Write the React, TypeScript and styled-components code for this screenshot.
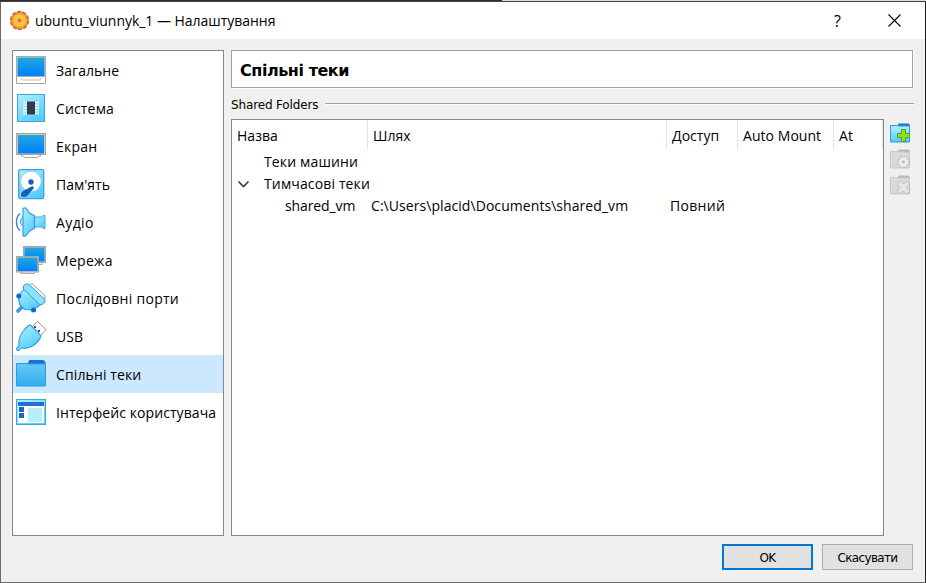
import React from "react";
import styled, { createGlobalStyle } from "styled-components";

const GlobalStyle = createGlobalStyle`
  * { box-sizing: border-box; }
  body { margin: 0; background: #fff; }
`;

const ui = '"Open Sans", "Noto Sans", sans-serif';
const dialogFont = '"DejaVu Sans", sans-serif';

const Desktop = styled.div`
  width: 926px;
  height: 583px;
  padding-top: 1px;
  background: linear-gradient(90deg, #2d2d30 0 502px, #dcdcdc 502px);
  overflow: hidden;
`;
const Window = styled.div`
  height: 582px;
  display: flex;
  flex-direction: column;
  background: #f0f0f0;
  border: 1px solid #6b6b6b;
  border-top-color: #444;
  border-right-color: #1c1c1c;
  color: #000;
  font: 14px/20px ${ui};
`;
const TitleBar = styled.header`
  height: 37px;
  flex: none;
  display: flex;
  align-items: center;
  padding: 0 2px 0 8px;
  background: #fff;
`;
const Text = styled.span<{ $ls?: number }>`
  white-space: pre;
  letter-spacing: ${(p) => p.$ls ?? 0}px;
`;
const Caption = styled(Text)`
  margin-left: 5px;
  flex: 1;
`;
const CaptionButton = styled.button`
  width: 57px;
  height: 36px;
  border: 0;
  padding: 0;
  background: none;
  display: flex;
  align-items: center;
  justify-content: center;
  font: 16px/20px ${ui};
`;
const Body = styled.div`
  height: 486px;
  margin-top: 11px;
  padding: 0 11px;
  display: flex;
  gap: 7px;
`;
const Sidebar = styled.nav`
  width: 212px;
  flex: none;
  background: #fff;
  border: 1px solid #828790;
`;
const NavItem = styled.div<{ $selected: boolean }>`
  height: 38px;
  display: flex;
  align-items: center;
  gap: 9px;
  padding: 0 0 0 2px;
  background: ${(p) => (p.$selected ? "#cce8ff" : "transparent")};
  svg { flex: none; }
`;
const NavLabel = styled(Text)`
  padding-top: 2px;
`;
const Main = styled.main`
  width: 683px;
  flex: none;
  display: flex;
  flex-direction: column;
`;
const PageTitle = styled.h1`
  width: 682px;
  height: 38px;
  margin: 0;
  padding: 3px 8px 0;
  display: flex;
  align-items: center;
  background: #fff;
  border: 1px solid #a0a0a0;
  box-shadow: 0 1px #fff, 1px 0 #fff;
  font: bold 16px/20px ${dialogFont};
`;
const GroupTitle = styled.div`
  height: 31px;
  padding-top: 1px;
  display: flex;
  align-items: center;
  gap: 7px;
  font: 12px/16px ${dialogFont};
`;
const GroupLabel = styled(Text)`
  padding-top: 2px;
`;
const Rule = styled.span`
  height: 2px;
  flex: 1;
  background: linear-gradient(#a0a0a0 50%, #fff 50%);
`;
const TableArea = styled.div`
  height: 417px;
  display: flex;
  gap: 5px;
`;
const Tree = styled.div`
  width: 653px;
  background: #fff;
  border: 1px solid #828790;
`;
const TreeHeader = styled.div`
  height: 31px;
  display: grid;
  grid-template-columns: 136px 299px 71px 96px 49px;
`;
const HeaderCell = styled.div`
  border-right: 1px solid #e5e5e5;
  height: 30px;
  padding: 6px 0 0 5px;
`;
const TreeRow = styled.div`
  height: 22px;
  display: grid;
  grid-template-columns: 139px 299px 1fr;
  align-items: center;
`;
const NameCell = styled.div<{ $indent: number }>`
  display: flex;
  align-items: center;
  padding-left: ${(p) => p.$indent}px;
  white-space: nowrap;
`;
const Chevron = styled.svg`
  margin: 0 14px 0 5px;
  flex: none;
`;
const Tools = styled.div`
  padding-top: 4px;
  display: flex;
  flex-direction: column;
  gap: 4px;
`;
const Footer = styled.footer`
  display: flex;
  justify-content: flex-end;
  gap: 9px;
  padding: 8px 12px 0 0;
`;
const PushButton = styled.button<{ $primary?: boolean }>`
  width: 91px;
  height: 26px;
  padding: 2px 0 0;
  background: #e1e1e1;
  border: ${(p) => (p.$primary ? "2px solid #0078d7" : "1px solid #adadad")};
  font: 12px/16px ${dialogFont};
  color: #000;
  display: flex;
  align-items: center;
  justify-content: center;
`;

const Icon = ({ children, id }: { children: React.ReactNode; id: string }) => (
  <svg width="32" height="32" viewBox="0 0 32 32">
    <defs>
      <linearGradient id={`${id}-screen`} x1="0" y1="0" x2="0" y2="1">
        <stop offset="0" stopColor="#22a7dc" />
        <stop offset="1" stopColor="#0080fb" />
      </linearGradient>
      <linearGradient id={`${id}-light`} x1="0" y1="0" x2="0.6" y2="1">
        <stop offset="0" stopColor="#b2f0ff" />
        <stop offset="1" stopColor="#55cdfb" />
      </linearGradient>
      <linearGradient id={`${id}-folder`} x1="0" y1="0" x2="0" y2="1">
        <stop offset="0" stopColor="#66c9f8" />
        <stop offset="1" stopColor="#35aceb" />
      </linearGradient>
    </defs>
    {children}
  </svg>
);

const GeneralIcon = () => (
  <Icon id="general">
    <path d="M1.500 23v6.500h29V23" fill="#fff" stroke="#a5a5a5" />
    <path d="M6.500 24v1l1 1h17l1-1v-1" fill="#fff" stroke="#b8b8b8" />
    <rect x="1.500" y="2.500" width="29" height="20" fill="#ddd" stroke="#b0aaa6" />
    <rect x="2.500" y="3.500" width="27" height="18.500" fill="url(#general-screen)" />
  </Icon>
);
const SystemIcon = () => (
  <Icon id="system">
    <rect x="2.500" y="2.500" width="27" height="27" fill="url(#system-light)" stroke="#459fdd" />
    <path d="M8 10.500h16M8 13.300h16M8 16h16M8 18.700h16M8 21.500h16" stroke="#effcff" strokeWidth="1.600" />
    <rect x="12" y="9.500" width="8" height="13" fill="#343a48" />
  </Icon>
);
const DisplayIcon = () => (
  <Icon id="display">
    <path d="M6.500 24v2h2l1 1.500h13l1-1.500h2v-2" fill="#fff" stroke="#a5a5a5" />
    <rect x="1.500" y="3.500" width="29" height="21" fill="#c8c8c8" stroke="#aaa49f" />
    <rect x="3" y="5" width="26" height="18.500" fill="url(#display-screen)" />
  </Icon>
);
const StorageIcon = () => (
  <Icon id="storage">
    <rect x="3.700" y="1.700" width="25" height="29" rx="1.500" fill="url(#storage-light)" stroke="#3f9edb" strokeWidth="1.300" />
    <circle cx="16" cy="13.500" r="10.300" fill="#fff" stroke="#7cc8ec" strokeWidth=".7" />
    <circle cx="16" cy="14" r="2.700" fill="#1263b4" />
    <path d="M17.500 18l1.500 2-6.500 7.500c-2 2-4 1.500-6.500.5 0-2 0-3.500 2-5z" fill="#1660b8" />
  </Icon>
);
const AudioIcon = () => (
  <Icon id="audio">
    <path d="M5 7.500C.3 11.500 .3 20.500 5 24.500" fill="none" stroke="#3481c8" strokeWidth="1.400" />
    <path d="M8 11c-3.500 2.500-3.500 7 0 9.500" fill="#b2efff" stroke="#3d9bd8" />
    <path d="M18.500 11h8.500l1-1.500h2v13h-2l-1-1.500h-8.500z" fill="url(#audio-light)" stroke="#4ba8df" />
    <path d="M8 2.500q2.500-1.500 4 1c1.500 3 4 5 7.500 6v13c-3.500 1-6 3-7.500 6Q10.500 31 8 30z" fill="url(#audio-light)" stroke="#399bda" strokeWidth="1.200" />
  </Icon>
);
const NetworkIcon = () => (
  <Icon id="network">
    <path d="M14 18.500v2h13v-2" fill="#fff" stroke="#aaa" />
    <rect x="8.500" y="2.500" width="22" height="16" fill="#ccc" stroke="#aaa49f" />
    <rect x="9.500" y="3.500" width="20" height="14" fill="url(#network-screen)" />
    <path d="M5.500 28v1.500h14V28" fill="#fff" stroke="#aaa" />
    <rect x="1.500" y="12.500" width="22" height="15.500" fill="#ccc" stroke="#aaa49f" />
    <rect x="2.500" y="13.500" width="20" height="13.500" fill="url(#network-screen)" />
  </Icon>
);
const SerialIcon = () => (
  <Icon id="serial">
    <path d="M14 4l3-2.500L30 13.500v3.500l-3 1z" fill="#fff" stroke="#999" />
    <path d="M8 24l-5 5" stroke="#3b9bd9" strokeWidth="3.800" strokeLinecap="round" />
    <path d="M10 5.500L5 12l-1.500 3 1 7 5 5.500 7 .5 3.500-1.500 6-4z" fill="url(#serial-light)" stroke="#379bdf" strokeWidth="1.200" />
    <path d="M10.500 2h3L30 17.500v2.500l-3 2.500h-2.500L8.500 7V4z" fill="#8ee1fd" stroke="#319bdd" />
    <circle cx="3.800" cy="14" r="2.500" fill="#0769d5" />
    <circle cx="18.500" cy="28" r="2.500" fill="#0769d5" />
  </Icon>
);
const UsbIcon = () => (
  <Icon id="usb">
    <path d="M15 8.500l7.500-7L31 9.500l-7 8z" fill="#fff" stroke="#979797" />
    <path d="M19 6h2v2h-2zM23 10h2v2h-2z" fill="#4a4a4a" />
    <path d="M6 26l-3 3" stroke="#3192d5" strokeWidth="4" strokeLinecap="round" />
    <path d="M13.500 5.500q1.500-.8 3 .7l8.500 8.500q1.200 1.300.5 2.800C22 24.500 14 29.500 7 28q-2.500-.5-3-3C3 18 7.500 10.500 13.500 5.500z" fill="url(#usb-light)" stroke="#369bdb" strokeWidth="1.200" />
    <path d="M5.500 26.500L3 29" stroke="#8bdcf8" strokeWidth="1.800" strokeLinecap="round" />
  </Icon>
);
const FolderIcon = () => (
  <Icon id="folder">
    <path d="M12 6l2.500-4h14l2 2v4H12z" fill="#1874d2" />
    <path d="M1.500 5.500h11l2 .5h16v22h-29z" fill="url(#folder-folder)" stroke="#289ce6" />
  </Icon>
);
const InterfaceIcon = () => (
  <Icon id="interface">
    <rect x="1.500" y="3.500" width="29" height="25" fill="url(#interface-light)" stroke="#3da4e8" />
    <rect x="3" y="10" width="26" height="17" fill="#fff" />
    <path d="M3 6h26v4H3z" fill="#246fcf" />
    <path d="M4 11h5v5H4zM4 17h5v5H4z" fill="#1766d0" />
    <path d="M13 12h14v14H13z" fill="#b7eefe" />
  </Icon>
);
const AppIcon = () => (
  <svg width="21" height="21" viewBox="0 0 21 21">
    <defs>
      <radialGradient id="app-orange">
        <stop offset=".1" stopColor="#ffcf55" />
        <stop offset=".65" stopColor="#ffc040" />
        <stop offset="1" stopColor="#f08a2c" />
      </radialGradient>
    </defs>
    <circle cx="10.500" cy="10.500" r="8.500" fill="none" stroke="#cf6a2c" strokeWidth="2.400" strokeDasharray="4 1.340" />
    <circle cx="10.500" cy="10.500" r="8.300" fill="url(#app-orange)" stroke="#dc722b" strokeWidth=".8" />
    <circle cx="10.500" cy="10.500" r="2.200" fill="#f0842a" />
    <circle cx="10.500" cy="10.500" r=".8" fill="#b95d32" />
  </svg>
);

type Action = "add" | "edit" | "remove";
const ToolIcon = ({ action }: { action: Action }) => {
  const active = action === "add";
  return (
    <svg width="22" height="22" viewBox="0 0 22 22">
      <defs>
        <linearGradient id="tool-blue" x1="0" y1="0" x2="0" y2="1">
          <stop stopColor="#b0f0ff" />
          <stop offset="1" stopColor="#58c9f5" />
        </linearGradient>
      </defs>
      <path d="M8.500 3l1-2.500h10l1.500 1.500v2h-12.500z" fill={active ? "#246fce" : "#b9b9b9"} />
      <path d="M1.500 2.500h7l1 .5h11v16h-19z" fill={active ? "url(#tool-blue)" : "#dadada"} stroke={active ? "#3798df" : "#c8c8c8"} />
      {action === "add" && (
        <path d="M12.500 6.500h4v4h4v4h-4v4h-4v-4h-4v-4h4z" fill="#92e020" stroke="#52a51c" />
      )}
      {action === "edit" && (
        <g fill="none">
          <circle cx="14.500" cy="13" r="4.700" stroke="#b5b5b5" strokeWidth="3" strokeDasharray="2.400 1.290" />
          <circle cx="14.500" cy="13" r="4.400" stroke="#eee" strokeWidth="2.200" strokeDasharray="1.600 1.855" strokeDashoffset="-.4" />
          <circle cx="14.500" cy="13" r="3" stroke="#eee" strokeWidth="2.400" />
          <circle cx="14.500" cy="13" r="1.300" fill="#bbb" />
        </g>
      )}
      {action === "remove" && (
        <path d="M8.500 8.500l2-2h1.500l2.500 2.500 2.500-2.500h1.500l2 2v1.500l-2.500 2.500 2.500 2.500v1.500l-2 2h-1.500l-2.500-2.500-2.500 2.500h-1.500l-2-2v-1.500l2.500-2.500-2.500-2.500z" fill="#e5e5e5" stroke="#bababa" />
      )}
    </svg>
  );
};

const pages = [
  { label: "Загальне", Glyph: GeneralIcon, ls: 0.05 },
  { label: "Система", Glyph: SystemIcon, ls: 0.15 },
  { label: "Екран", Glyph: DisplayIcon, ls: 0.2 },
  { label: "Пам'ять", Glyph: StorageIcon, ls: 0 },
  { label: "Аудіо", Glyph: AudioIcon, ls: 0.4 },
  { label: "Мережа", Glyph: NetworkIcon, ls: 0.3 },
  { label: "Послідовні порти", Glyph: SerialIcon, ls: 0.28 },
  { label: "USB", Glyph: UsbIcon, ls: 0 },
  { label: "Спільні теки", Glyph: FolderIcon, ls: 0.12 },
  { label: "Інтерфейс користувача", Glyph: InterfaceIcon, ls: 0.08 },
];
const columns = ["Назва", "Шлях", "Доступ", "Auto Mount", "At"];

export default function App() {
  return (
    <>
      <GlobalStyle />
      <Desktop>
        <Window>
          <TitleBar>
            <AppIcon />
            <Caption $ls={-0.03}>ubuntu_viunnyk_1 — Налаштування</Caption>
            <CaptionButton>?</CaptionButton>
            <CaptionButton>
              <svg width="13" height="13" viewBox="0 0 13 13">
                <path d="M.5.500l12 12M12.500.500l-12 12" stroke="#000" strokeWidth="1.100" />
              </svg>
            </CaptionButton>
          </TitleBar>
          <Body>
            <Sidebar>
              {pages.map(({ label, Glyph, ls }) => (
                <NavItem key={label} $selected={label === "Спільні теки"}>
                  <Glyph />
                  <NavLabel $ls={ls}>{label}</NavLabel>
                </NavItem>
              ))}
            </Sidebar>
            <Main>
              <PageTitle><Text $ls={-0.45}>Спільні теки</Text></PageTitle>
              <GroupTitle>
                <GroupLabel $ls={-0.15}>Shared Folders</GroupLabel>
                <Rule />
              </GroupTitle>
              <TableArea>
                <Tree>
                  <TreeHeader>
                    {columns.map((label) => (
                      <HeaderCell key={label}><Text $ls={0.05}>{label}</Text></HeaderCell>
                    ))}
                  </TreeHeader>
                  <TreeRow>
                    <NameCell $indent={32}><Text $ls={0.15}>Теки машини</Text></NameCell>
                  </TreeRow>
                  <TreeRow>
                    <NameCell $indent={0}>
                      <Chevron width="13" height="8" viewBox="0 0 13 8">
                        <path d="M1.500 1.500l5 5 5-5" fill="none" stroke="#404040" strokeWidth="1.700" />
                      </Chevron>
                      <Text $ls={0.14}>Тимчасові теки</Text>
                    </NameCell>
                  </TreeRow>
                  <TreeRow>
                    <NameCell $indent={53}><Text $ls={-0.1}>shared_vm</Text></NameCell>
                    <Text $ls={0.06}>C:\Users\placid\Documents\shared_vm</Text>
                    <Text $ls={0.3}>Повний</Text>
                  </TreeRow>
                </Tree>
                <Tools>
                  <ToolIcon action="add" />
                  <ToolIcon action="edit" />
                  <ToolIcon action="remove" />
                </Tools>
              </TableArea>
            </Main>
          </Body>
          <Footer>
            <PushButton $primary><Text $ls={-0.6}>OK</Text></PushButton>
            <PushButton><Text $ls={-0.65}>Скасувати</Text></PushButton>
          </Footer>
        </Window>
      </Desktop>
    </>
  );
}
